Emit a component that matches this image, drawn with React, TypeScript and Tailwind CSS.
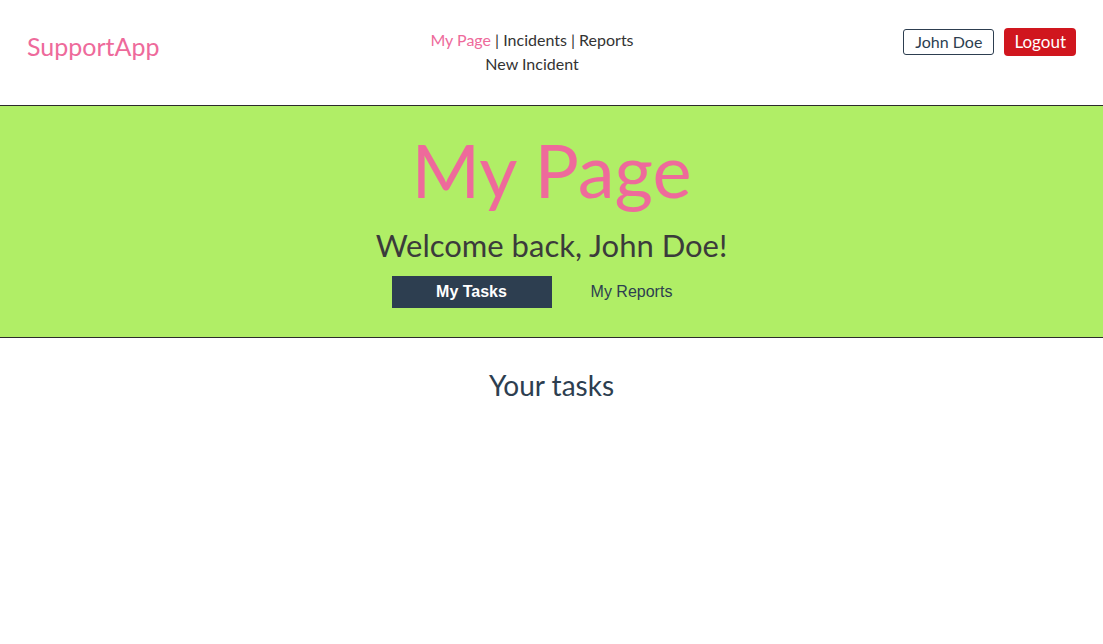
export default function App() {
  const f = { fontFamily: "Lato, 'Noto Sans', sans-serif" };
  return (
    <div className="min-h-[644px] bg-white" style={f}>
      <header className="h-[106px] border-b border-[#2b2b2b] flex items-start pl-[27px] pr-[27px]">
        <div className="w-[401px] text-[25px] text-[#ee6a9b] mt-[30px] leading-[32px]">SupportApp</div>
        <nav className="mt-[28px] text-center text-[16px] leading-[24px] text-[#333] w-[208px]">
          <span className="text-[#ee6a9b]">My Page</span> | Incidents | Reports
          <br />New Incident
        </nav>
        <div className="flex-1" />
        <div className="flex items-center gap-[10px] mt-[28px]">
          <button className="border border-[#2d3e50] rounded-[3px] px-[11px] h-[26px] text-[16px] text-[#2d3e50] leading-[24px]">John Doe</button>
          <button className="bg-[#d0161e] rounded-[4px] px-[10px] h-[28px] text-[17px] text-white leading-[28px]">Logout</button>
        </div>
      </header>
      <section className="bg-[#b0ee66] border-b border-[#2b2b2b] h-[232px] flex flex-col items-center">
        <h1 className="text-[74px] leading-[80px] text-[#ee6a9b] mt-[24px]">My Page</h1>
        <h2 className="text-[31px] leading-[40px] text-[#3b3b3b] mt-[15px]">Welcome back, John Doe!</h2>
        <div className="flex mt-[11px]" style={{ fontFamily: "'Liberation Sans', Arial, sans-serif" }}>
          <button className="w-[160px] h-[32px] bg-[#2d3e50] text-white font-bold text-[16px]">My Tasks</button>
          <button className="w-[160px] h-[32px] text-[#2d3e50] text-[16px]">My Reports</button>
        </div>
      </section>
      <div className="flex justify-center">
        <h3 className="text-[28px] text-[#2d3e50] mt-[29px] leading-[36px]">Your tasks</h3>
      </div>
    </div>
  );
}
